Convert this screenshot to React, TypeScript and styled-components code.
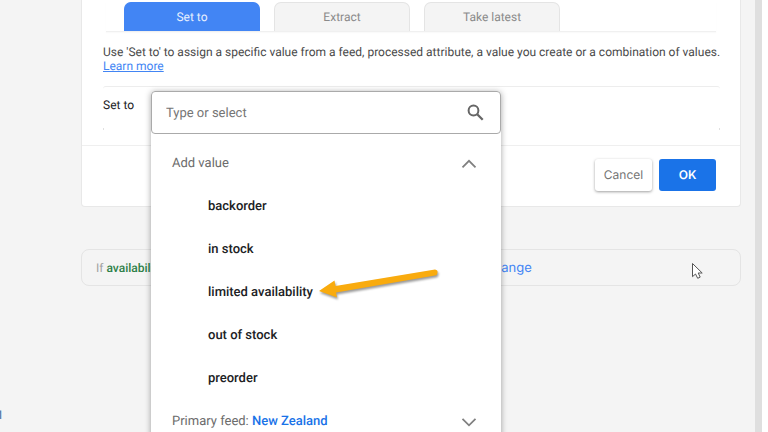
import React from "react";
import styled, { createGlobalStyle, css } from "styled-components";

const GlobalStyle = createGlobalStyle`
  *, *::before, *::after { box-sizing: border-box; }
  body {
    margin: 0;
    background: #f4f4f4;
    font-family: Roboto, "Liberation Sans", sans-serif;
    font-size: 12px;
    line-height: 14px;
    color: #4a4a4a;
    text-rendering: geometricPrecision;
  }
  button, input { font: inherit; text-rendering: inherit; }
`;

const Screen = styled.div`
  position: relative;
  display: flex;
  height: 100vh;
  overflow: hidden;
  background: #f4f4f4;
`;

const Main = styled.main`
  flex: 1;
  min-width: 0;
  padding: 0 14px 0 81px;
`;

const ScrollTrack = styled.div`
  flex: none;
  width: 7px;
  background: #dfdfdf;
`;

const WindowEdge = styled.div`
  flex: none;
  width: 6px;
  background: #ffffff;
`;

const Card = styled.section`
  background: #ffffff;
  border: 1px solid #e8e8e8;
  border-top: 0;
  border-radius: 0 0 4px 4px;
`;

const CardBody = styled.div`
  padding: 2px 20px 15px 21px;
`;

const TabBar = styled.div`
  display: flex;
  gap: 14px;
  margin: 0 4px 0 3px;
  padding: 0 18px;
  border-bottom: 1px solid #f0f0f0;
  box-shadow: 0 1px 1px #fafafa;
`;

const Tab = styled.button<{ $active?: boolean }>`
  width: 136px;
  height: 29px;
  padding: 0;
  border: 1px solid #e4e4e4;
  border-bottom: 0;
  border-radius: 7px 7px 0 0;
  background: #f4f4f4;
  color: #8a8a8a;
  cursor: pointer;
  ${(p) =>
    p.$active &&
    css`
      background: #4285f4;
      border-color: #4285f4;
      color: #e8f0fe;
    `}
`;

const Description = styled.p`
  margin: 13px 0 0;
  white-space: nowrap;
`;

const LearnMore = styled.a`
  color: #4285f4;
  text-decoration: underline;
`;

const Field = styled.div`
  position: relative;
  display: flex;
  height: 44px;
  margin-top: 13px;
  border-top: 1px solid #ededed;
  border-radius: 3px;

  &::after {
    content: "";
    position: absolute;
    right: 0;
    bottom: 0;
    left: 0;
    height: 2px;
    border: solid #e0e0e0;
    border-width: 0 1px;
  }
`;

const FieldLabel = styled.label`
  padding-top: 11px;
  color: #202124;
`;

const Dropdown = styled.div`
  position: absolute;
  z-index: 2;
  top: 4px;
  left: 48px;
  width: 350px;
  background: #ffffff;
  border-radius: 4px;
  box-shadow: 0 1px 6px rgba(0, 0, 0, 0.36);
`;

const SearchBox = styled.div`
  display: flex;
  align-items: center;
  height: 43px;
  padding: 0 16px 0 14px;
  border: 1px solid #aaaaaa;
  border-radius: 4px;
`;

const SearchInput = styled.input`
  flex: 1;
  min-width: 0;
  padding: 2px 0 0;
  border: 0;
  outline: 0;
  background: transparent;
  font-size: 13px;
  color: #303030;
  &::placeholder {
    color: #757575;
    opacity: 1;
  }
`;

const GroupHeader = styled.button`
  display: flex;
  align-items: center;
  justify-content: space-between;
  width: 100%;
  height: 43px;
  padding: 0 24px 0 21px;
  border: 0;
  background: transparent;
  font-size: 13px;
  color: #6c6c6c;
  cursor: pointer;
`;

const FeedName = styled.span`
  font-weight: 500;
  color: #1a73e8;
`;

const Options = styled.ul`
  margin: 0;
  padding: 0;
  list-style: none;
`;

const GroupSet = styled.div`
  padding-top: 8px;
`;

const Option = styled.button`
  display: block;
  width: 100%;
  height: 43px;
  padding: 0 0 0 57px;
  border: 0;
  background: transparent;
  font-weight: 500;
  font-size: 13px;
  text-align: left;
  color: #202124;
  cursor: pointer;
`;

const Footer = styled.footer`
  display: flex;
  justify-content: flex-end;
  gap: 7px;
  padding: 13px 24px 15px;
  border-top: 1px solid #efefef;
`;

const ActionButton = styled.button<{ $primary?: boolean }>`
  width: 57px;
  height: 32px;
  padding: 0;
  border: 0;
  border-radius: 3px;
  background: #ffffff;
  box-shadow: 0 1px 3px rgba(0, 0, 0, 0.38);
  font-family: Inter, Roboto, sans-serif;
  font-size: 12px;
  color: #757575;
  cursor: pointer;
  ${(p) =>
    p.$primary &&
    css`
      background: #1a73e8;
      box-shadow: none;
      font-weight: 600;
      color: #ffffff;
    `}
`;

const ConditionBar = styled.section`
  display: flex;
  align-items: center;
  height: 37px;
  margin-top: 42px;
  padding: 0 14px;
  border: 1px solid #e4e4e4;
  border-radius: 8px;
`;

const Condition = styled.span`
  flex: 0 0 388px;
  color: #a0a0a0;
`;

const Attribute = styled.span`
  font-weight: 500;
  color: #2e8048;
`;

const ChangeButton = styled.button`
  padding: 0;
  border: 0;
  background: transparent;
  font-family: Inter, Roboto, sans-serif;
  font-size: 13px;
  color: #4285f4;
  cursor: pointer;
`;

const SideMark = styled.span`
  position: absolute;
  left: 0;
  bottom: 10px;
  display: flex;
  justify-content: flex-end;
  width: 2px;
  overflow: hidden;
  font-weight: 500;
  color: #5c7da8;
`;

const ArrowMark = styled.svg`
  position: absolute;
  z-index: 3;
  top: 262px;
  left: 314px;
  filter: drop-shadow(1px 2px 1px rgba(0, 0, 0, 0.4));
`;

const Pointer = styled.svg`
  position: absolute;
  z-index: 3;
  top: 262px;
  left: 691px;
`;

const Chevron = ({ up }: { up?: boolean }) => (
  <svg width="16" height="10" viewBox="0 0 16 10" fill="none" aria-hidden="true">
    <path
      d={up ? "M1.5 8.3 8 1.8l6.5 6.5" : "M1.5 1.8 8 8.3l6.5-6.5"}
      stroke="#808080"
      strokeWidth="1.8"
    />
  </svg>
);

const SearchIcon = () => (
  <svg width="17" height="17" viewBox="0 0 17 17" fill="none" aria-hidden="true">
    <circle cx="6.5" cy="6.5" r="4.9" stroke="#666" strokeWidth="2" />
    <path d="m10.2 10.2 5.5 5.5" stroke="#666" strokeWidth="2.3" />
  </svg>
);

const values = ["backorder", "in stock", "limited availability", "out of stock", "preorder"];

export default function App() {
  return (
    <>
      <GlobalStyle />
      <Screen>
        <Main>
          <Card>
            <CardBody>
              <TabBar role="tablist">
                <Tab role="tab" aria-selected="true" $active>
                  Set to
                </Tab>
                <Tab role="tab" aria-selected="false">
                  Extract
                </Tab>
                <Tab role="tab" aria-selected="false">
                  Take latest
                </Tab>
              </TabBar>
              <Description>
                Use 'Set to' to assign a specific value from a feed, processed attribute, a value
                you create or a combination of values.
                <br />
                <LearnMore href="#learn-more">Learn more</LearnMore>
              </Description>
              <Field>
                <FieldLabel htmlFor="set-to">Set to</FieldLabel>
                <Dropdown>
                  <SearchBox>
                    <SearchInput id="set-to" type="text" placeholder="Type or select" />
                    <SearchIcon />
                  </SearchBox>
                  <GroupSet>
                    <GroupHeader aria-expanded="true">
                      Add value
                      <Chevron up />
                    </GroupHeader>
                    <Options>
                      {values.map((v) => (
                        <li key={v}>
                          <Option>{v}</Option>
                        </li>
                      ))}
                    </Options>
                    <GroupHeader aria-expanded="false">
                      <span>
                        Primary feed: <FeedName>New Zealand</FeedName>
                      </span>
                      <Chevron />
                    </GroupHeader>
                  </GroupSet>
                </Dropdown>
              </Field>
            </CardBody>
            <Footer>
              <ActionButton>Cancel</ActionButton>
              <ActionButton $primary>OK</ActionButton>
            </Footer>
          </Card>
          <ConditionBar>
            <Condition>
              If <Attribute>availability</Attribute>
            </Condition>
            <ChangeButton>Change</ChangeButton>
          </ConditionBar>
        </Main>
        <ScrollTrack />
        <WindowEdge />
        <SideMark>M</SideMark>
        <ArrowMark width="128" height="40" viewBox="0 0 128 40" aria-hidden="true">
          <path
            d="M5 29 20.500 18.500 21.500 24 121 7.500Q124 8 123.500 10.500 123.500 13 121 13.500L22 30.500 23 35.500Z"
            fill="#f9ab0e"
          />
        </ArrowMark>
        <Pointer width="14" height="18" viewBox="0 0 14 18" aria-hidden="true">
          <path
            d="M1.5 1.5v13.2l3-2.7 2.2 4.3 2.5-1.2-2-4.100h4Z"
            fill="#fff"
            stroke="#555"
            strokeWidth="1"
          />
        </Pointer>
      </Screen>
    </>
  );
}
